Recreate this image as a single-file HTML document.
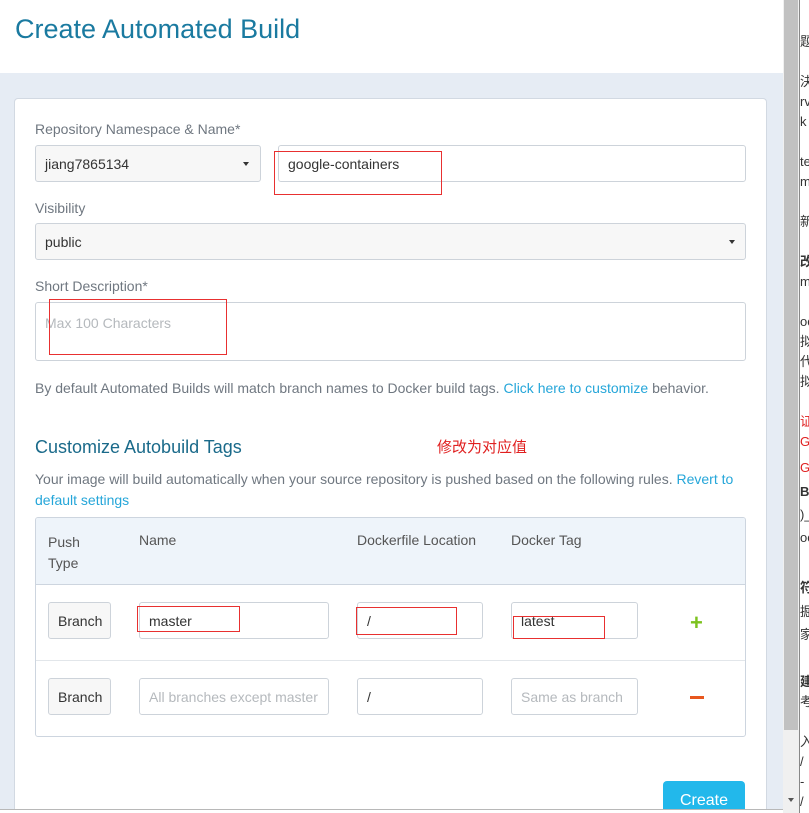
<!DOCTYPE html>
<html style="width:809px;height:813px;overflow:hidden"><head><meta charset="utf-8"><style>
*{box-sizing:border-box;margin:0;padding:0}
body{width:809px;height:813px;overflow:hidden;position:relative;font-family:"Liberation Sans","Noto Sans CJK SC",sans-serif;background:#fff}
.a{position:absolute}
.lbl{color:#6f7780;font-size:14px}
.inp{position:absolute;border:1px solid #cdd3da;border-radius:3px;background:#fff;font-size:14px;color:#333;padding-left:9px;display:flex;align-items:center;overflow:hidden;white-space:nowrap}
.sel{background:#f7f7f7}
.ph{color:#b5b9bd}
.red{position:absolute;border:1px solid #e83030}
.car{position:absolute;width:0;height:0;border-left:3px solid transparent;border-right:3px solid transparent;border-top:4px solid #333}
</style></head><body>
<div class="a" style="left:0;top:0;width:783px;height:73px;background:#fff"></div>
<div class="a" style="left:15px;top:14px;font-size:27px;color:#1a7aa0">Create Automated Build</div>
<div class="a" style="left:0;top:73px;width:783px;height:740px;background:#e6ecf4"></div>
<div class="a" style="left:14px;top:98px;width:753px;height:715px;background:#fff;border:1px solid #d2d9e2;border-bottom:none;border-radius:4px 4px 0 0"></div>

<div class="a lbl" style="left:35px;top:121px">Repository Namespace &amp; Name*</div>
<div class="inp sel" style="left:35px;top:145px;width:226px;height:37px">jiang7865134</div>
<div class="car" style="left:243px;top:162px"></div>
<div class="inp" style="left:278px;top:145px;width:468px;height:37px">google-containers</div>
<div class="red" style="left:274px;top:151px;width:168px;height:44px"></div>

<div class="a lbl" style="left:35px;top:200px">Visibility</div>
<div class="inp sel" style="left:35px;top:223px;width:711px;height:37px">public</div>
<div class="car" style="left:729px;top:240px"></div>

<div class="a lbl" style="left:35px;top:278px">Short Description*</div>
<div class="inp" style="left:35px;top:302px;width:711px;height:59px;align-items:flex-start;padding-top:12px"><span class="ph">Max 100 Characters</span></div>
<div class="red" style="left:49px;top:299px;width:178px;height:56px"></div>

<div class="a" style="left:35px;top:380px;font-size:14px;color:#6f7780">By default Automated Builds will match branch names to Docker build tags. <span style="color:#25a6d9">Click here to customize</span> behavior.</div>

<div class="a" style="left:35px;top:437px;font-size:18px;color:#1a6a8a">Customize Autobuild Tags</div>
<div class="a" style="left:437px;top:436px;font-size:15px;color:#e02020">修改为对应值</div>
<div class="a" style="left:35px;top:469px;width:720px;font-size:14px;line-height:21px;color:#6f7780">Your image will build automatically when your source repository is pushed based on the following rules. <span style="color:#25a6d9">Revert to default settings</span></div>

<div class="a" style="left:35px;top:517px;width:711px;height:220px;border:1px solid #cdd5df;border-radius:3px;overflow:hidden">
 <div class="a" style="left:0;top:0;width:711px;height:67px;background:#eef4fa;border-bottom:1px solid #cdd5df"></div>
 <div class="a" style="left:0;top:142px;width:711px;height:1px;background:#e2e6ea"></div>
</div>
<div class="a" style="left:48px;top:532px;font-size:14px;line-height:21px;color:#555">Push<br>Type</div>
<div class="a" style="left:139px;top:532px;font-size:14px;color:#555">Name</div>
<div class="a" style="left:357px;top:532px;font-size:14px;color:#555">Dockerfile Location</div>
<div class="a" style="left:511px;top:532px;font-size:14px;color:#555">Docker Tag</div>

<div class="inp sel" style="left:48px;top:602px;width:63px;height:37px">Branch</div>
<div class="inp" style="left:139px;top:602px;width:190px;height:37px">master</div>
<div class="inp" style="left:357px;top:602px;width:126px;height:37px">/</div>
<div class="inp" style="left:511px;top:602px;width:127px;height:37px;align-items:flex-start;padding-top:10px">latest</div>
<div class="red" style="left:137px;top:606px;width:103px;height:26px"></div>
<div class="red" style="left:356px;top:607px;width:101px;height:28px"></div>
<div class="red" style="left:513px;top:616px;width:92px;height:23px"></div>
<div class="a" style="left:690px;top:613px;font-size:22px;font-weight:bold;color:#7cc21e;line-height:20px">+</div>

<div class="inp sel" style="left:48px;top:678px;width:63px;height:37px">Branch</div>
<div class="inp" style="left:139px;top:678px;width:190px;height:37px"><span class="ph">All branches except master</span></div>
<div class="inp" style="left:357px;top:678px;width:126px;height:37px">/</div>
<div class="inp" style="left:511px;top:678px;width:127px;height:37px"><span class="ph">Same as branch</span></div>
<div class="a" style="left:690px;top:696px;width:14px;height:3px;background:#e8571e"></div>

<div class="a" style="left:663px;top:781px;width:82px;height:28px;background:#22b8eb;border-radius:4px 4px 0 0;color:#fff;font-size:16px;text-align:center;padding-top:11px;overflow:hidden">Create</div>
<div class="a" style="left:0;top:809px;width:783px;height:1px;background:#b8b8b8"></div>
<div class="a" style="left:0;top:810px;width:783px;height:3px;background:#fff"></div>

<div class="a" style="left:783px;top:0;width:16px;height:813px;background:#f0f0f0"></div>
<div class="a" style="left:784px;top:0;width:14px;height:730px;background:#c1c1c1"></div>
<div class="car" style="left:788px;top:798px;border-top-color:#555"></div>
<div class="a" style="left:799px;top:0;width:1px;height:813px;background:#888"></div>
<div class="a" style="left:800px;top:0;width:9px;height:813px;background:#fff;overflow:hidden;font-size:13px;line-height:19px;color:#333">
<div style="position:absolute;top:32px">题</div>
<div style="position:absolute;top:72px">決</div>
<div style="position:absolute;top:92px">rv</div>
<div style="position:absolute;top:112px">k</div>
<div style="position:absolute;top:152px">te</div>
<div style="position:absolute;top:172px">m</div>
<div style="position:absolute;top:212px">新</div>
<div style="position:absolute;top:252px;font-weight:bold">改</div>
<div style="position:absolute;top:272px">m</div>
<div style="position:absolute;top:312px">oc</div>
<div style="position:absolute;top:332px">拟</div>
<div style="position:absolute;top:352px">代</div>
<div style="position:absolute;top:372px">拟</div>
<div style="position:absolute;top:412px;color:#e02020">证</div>
<div style="position:absolute;top:432px;color:#e02020">GA</div>
<div style="position:absolute;top:458px;color:#e02020">GA</div>
<div style="position:absolute;top:482px;font-weight:bold">B_</div>
<div style="position:absolute;top:505px">)_</div>
<div style="position:absolute;top:528px">oc</div>
<div style="position:absolute;top:578px;font-weight:bold">符</div>
<div style="position:absolute;top:602px">掘</div>
<div style="position:absolute;top:625px">家</div>
<div style="position:absolute;top:672px;font-weight:bold">建</div>
<div style="position:absolute;top:692px">考</div>
<div style="position:absolute;top:732px">入</div>
<div style="position:absolute;top:752px">/</div>
<div style="position:absolute;top:772px">-</div>
<div style="position:absolute;top:792px">/</div>
</div>
</body></html>
